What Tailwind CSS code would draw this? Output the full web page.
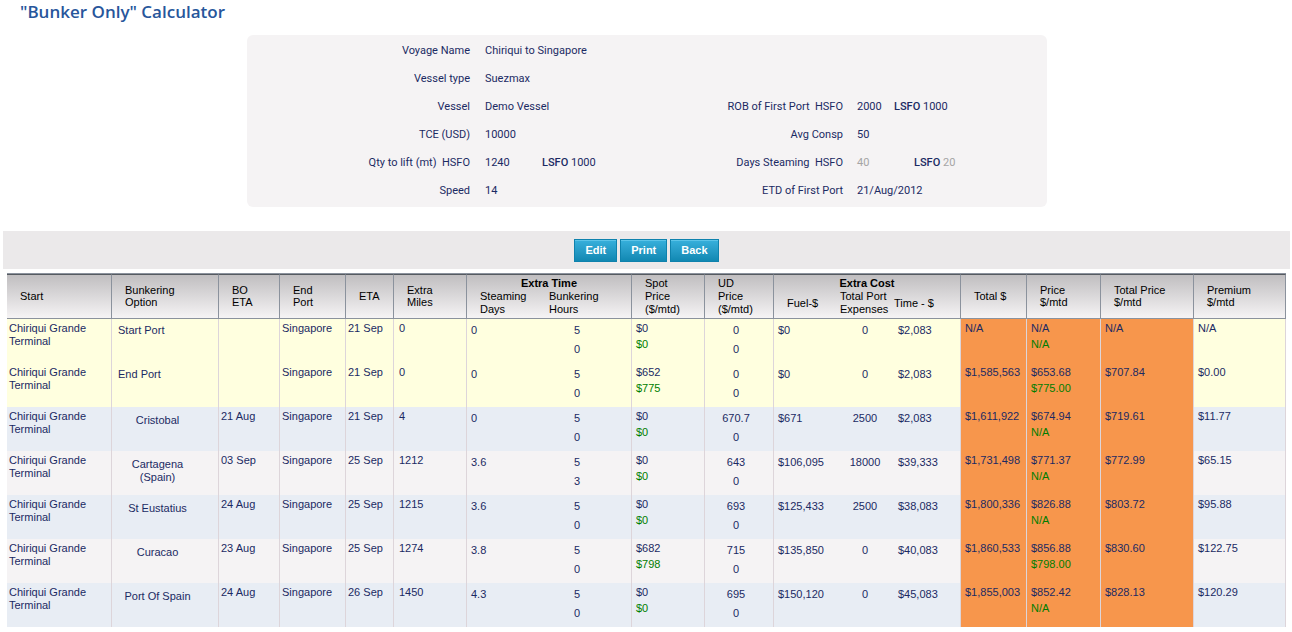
<!DOCTYPE html>
<html lang="en">
<head>
<meta charset="utf-8">
<meta name="viewport" content="width=device-width, initial-scale=1">
<title>"Bunker Only" Calculator</title>
<script src="https://cdn.jsdelivr.net/npm/@tailwindcss/browser@4"></script>
</head>
<body class="bg-white font-['Liberation_Sans',Arial,sans-serif] text-[11px] leading-[13px] text-[#1b2a63]">
<h1 class="pl-5 h-[35px] font-['Open_Sans',sans-serif] text-[17px] leading-6 font-semibold text-[#27569b]">"Bunker Only" Calculator</h1>

<div class="pl-0.5">
<section class="mx-auto flex max-w-[800px] rounded-md bg-[#f5f3f4] py-0.5 font-[Roboto,sans-serif] leading-7">
  <dl class="grid w-1/2 grid-cols-[223px_1fr] content-start gap-x-[15px]">
    <dt class="text-right">Voyage Name</dt><dd>Chiriqui to Singapore</dd>
    <dt class="text-right">Vessel type</dt><dd>Suezmax</dd>
    <dt class="text-right">Vessel</dt><dd>Demo Vessel</dd>
    <dt class="text-right">TCE (USD)</dt><dd>10000</dd>
    <dt class="text-right">Qty to lift (mt)&nbsp; HSFO</dt><dd class="flex"><span class="w-[57px]">1240</span><span><span class="font-medium">LSFO</span> 1000</span></dd>
    <dt class="text-right">Speed</dt><dd>14</dd>
  </dl>
  <dl class="grid w-1/2 grid-cols-[196px_1fr] content-start gap-x-[14px] pt-14">
    <dt class="text-right">ROB of First Port&nbsp; HSFO</dt><dd class="flex"><span class="w-[37px]">2000</span><span><span class="font-medium">LSFO</span> 1000</span></dd>
    <dt class="text-right">Avg Consp</dt><dd>50</dd>
    <dt class="text-right">Days Steaming&nbsp; HSFO</dt><dd class="flex"><span class="w-[57px] text-[#a5a5a5]">40</span><span><span class="font-medium">LSFO</span> <span class="text-[#a5a5a5]">20</span></span></dd>
    <dt class="text-right">ETD of First Port</dt><dd>21/Aug/2012</dd>
  </dl>
</section>
</div>

<div class="mt-6 ml-[3px] mr-0.5 flex h-[38px] items-center justify-center gap-[3px] bg-[#ebe9ea]">
  <button type="button" class="h-[23px] border border-[#0f82ad] bg-linear-to-b from-[#37b0dc] to-[#1088b2] px-2.5 font-bold text-white inset-shadow-[0_1px_0_#5cc4e8]">Edit</button>
  <button type="button" class="h-[23px] border border-[#0f82ad] bg-linear-to-b from-[#37b0dc] to-[#1088b2] px-2.5 font-bold text-white inset-shadow-[0_1px_0_#5cc4e8]">Print</button>
  <button type="button" class="h-[23px] border border-[#0f82ad] bg-linear-to-b from-[#37b0dc] to-[#1088b2] px-2.5 font-bold text-white inset-shadow-[0_1px_0_#5cc4e8]">Back</button>
</div>

<div class="mt-1 mb-[5px] ml-[7px] mr-1.5 border-t border-[#8b929d]">
<table class="w-full table-fixed border-separate border-spacing-0">
  <colgroup>
    <col class="w-[105px]"><col class="w-[107px]"><col class="w-[61px]"><col class="w-[66px]"><col class="w-[48px]"><col class="w-[73px]"><col class="w-[165px]"><col class="w-[73px]"><col class="w-[69px]"><col class="w-[187px]"><col class="w-[66px]"><col class="w-[74px]"><col class="w-[93px]"><col class="w-[92px]">
  </colgroup>
  <thead>
    <tr class="h-[45px] bg-linear-to-b from-[#bfbdbf] to-[#f7f5f6] text-left leading-3 text-black [&>th]:border-t [&>th]:border-r [&>th]:border-b [&>th]:border-t-[#555a60] [&>th]:border-r-[#8b929d] [&>th]:border-b-[#8b929d] [&>th]:p-0 [&>th]:font-normal">
      <th scope="col"><div class="pb-0.5 pl-[13px]">Start</div></th>
      <th scope="col"><div class="pb-0.5 pl-[13px]">Bunkering<br>Option</div></th>
      <th scope="col"><div class="pb-0.5 pl-[13px]">BO<br>ETA</div></th>
      <th scope="col"><div class="pb-0.5 pl-[13px]">End<br>Port</div></th>
      <th scope="col"><div class="pb-0.5 pl-[13px]">ETA</div></th>
      <th scope="col"><div class="pb-0.5 pl-[13px]">Extra<br>Miles</div></th>
      <th scope="col"><div class="grid grid-cols-[69px_1fr] pl-[13px] leading-[13px]"><span class="col-span-2 -ml-[13px] text-center font-bold">Extra Time</span><span>Steaming<br>Days</span><span>Bunkering<br>Hours</span></div></th>
      <th scope="col"><div class="pl-[13px] leading-[13px]">Spot<br>Price<br>($/mtd)</div></th>
      <th scope="col"><div class="pl-[13px] leading-[13px]">UD<br>Price<br>($/mtd)</div></th>
      <th scope="col"><div class="grid grid-cols-[53px_54px_1fr] items-center pl-[13px] leading-[13px]"><span class="col-span-3 -ml-[13px] text-center font-bold">Extra Cost</span><span>Fuel-$</span><span>Total Port<br>Expenses</span><span>Time - $</span></div></th>
      <th scope="col"><div class="pb-0.5 pl-[13px]">Total $</div></th>
      <th scope="col"><div class="pb-0.5 pl-[13px]">Price<br>$/mtd</div></th>
      <th scope="col"><div class="pb-0.5 pl-[13px]">Total Price<br>$/mtd</div></th>
      <th scope="col"><div class="pb-0.5 pl-[13px]">Premium<br>$/mtd</div></th>
    </tr>
  </thead>
  <tbody id="options"></tbody>
</table>
</div>

<script>
// option, bunkering ETA, ETA, miles, steaming days, hours, hours 2, spot, spot 2, UD, fuel, port, time, total, price, price 2, total price, premium
const rows = [
  ["Start Port","","21 Sep","0","0","5","0","$0","$0","0","$0","0","$2,083","N/A","N/A","N/A","N/A","N/A"],
  ["End Port","","21 Sep","0","0","5","0","$652","$775","0","$0","0","$2,083","$1,585,563","$653.68","$775.00","$707.84","$0.00"],
  ["Cristobal","21 Aug","21 Sep","4","0","5","0","$0","$0","670.7","$671","2500","$2,083","$1,611,922","$674.94","N/A","$719.61","$11.77"],
  ["Cartagena<br>(Spain)","03 Sep","25 Sep","1212","3.6","5","3","$0","$0","643","$106,095","18000","$39,333","$1,731,498","$771.37","N/A","$772.99","$65.15"],
  ["St Eustatius","24 Aug","25 Sep","1215","3.6","5","0","$0","$0","693","$125,433","2500","$38,083","$1,800,336","$826.88","N/A","$803.72","$95.88"],
  ["Curacao","23 Aug","25 Sep","1274","3.8","5","0","$682","$798","715","$135,850","0","$40,083","$1,860,533","$856.88","$798.00","$830.60","$122.75"],
  ["Port Of Spain","24 Aug","26 Sep","1450","4.3","5","0","$0","$0","695","$150,120","0","$45,083","$1,855,003","$852.42","N/A","$828.13","$120.29"]
];
document.getElementById("options").innerHTML = rows.map((r, i) => {
  const bg = i < 2 ? "bg-[#ffffdf]" : i % 2 ? "bg-[#f5f3f4]" : "bg-[#e8edf4]";
  const option = i < 2 ? "pt-[5px] pl-1.5" : "pt-[7px] pr-[15px] text-center";
  return `<tr class="h-11 ${bg} align-top [&>td]:border-r [&>td]:border-[#ddd5da] [&>td]:p-0">
    <td><div class="pt-[3px] pl-0.5">Chiriqui Grande<br>Terminal</div></td>
    <td><div class="${option}">${r[0]}</div></td>
    <td><div class="pt-[3px] pl-0.5">${r[1]}</div></td>
    <td><div class="pt-[3px] pl-0.5">Singapore</div></td>
    <td><div class="pt-[3px] pl-0.5">${r[2]}</div></td>
    <td><div class="pt-[3px] pl-[5px]">${r[3]}</div></td>
    <td><div class="grid grid-cols-[80px_52px] pt-0.5 pl-1 leading-[19px]"><span>${r[4]}</span><span class="text-center">${r[5]}<br>${r[6]}</span></div></td>
    <td><div class="pt-px pl-1 leading-4">${r[7]}<br><span class="text-[#007d00]">${r[8]}</span></div></td>
    <td><div class="pt-0.5 pr-1.5 text-center leading-[19px]">${r[9]}<br>0</div></td>
    <td><div class="grid grid-cols-[62px_50px_1fr] pt-[5px] pl-1"><span>${r[10]}</span><span class="text-center">${r[11]}</span><span class="pl-2">${r[12]}</span></div></td>
    <td class="bg-[#f7964c]"><div class="pt-[3px] pl-1">${r[13]}</div></td>
    <td class="bg-[#f7964c]"><div class="pt-px pl-1 leading-4">${r[14]}<br><span class="text-[#007d00]">${r[15]}</span></div></td>
    <td class="bg-[#f7964c]"><div class="pt-[3px] pl-1">${r[16]}</div></td>
    <td><div class="pt-[3px] pl-1">${r[17]}</div></td>
  </tr>`;
}).join("");
</script>
</body>
</html>
